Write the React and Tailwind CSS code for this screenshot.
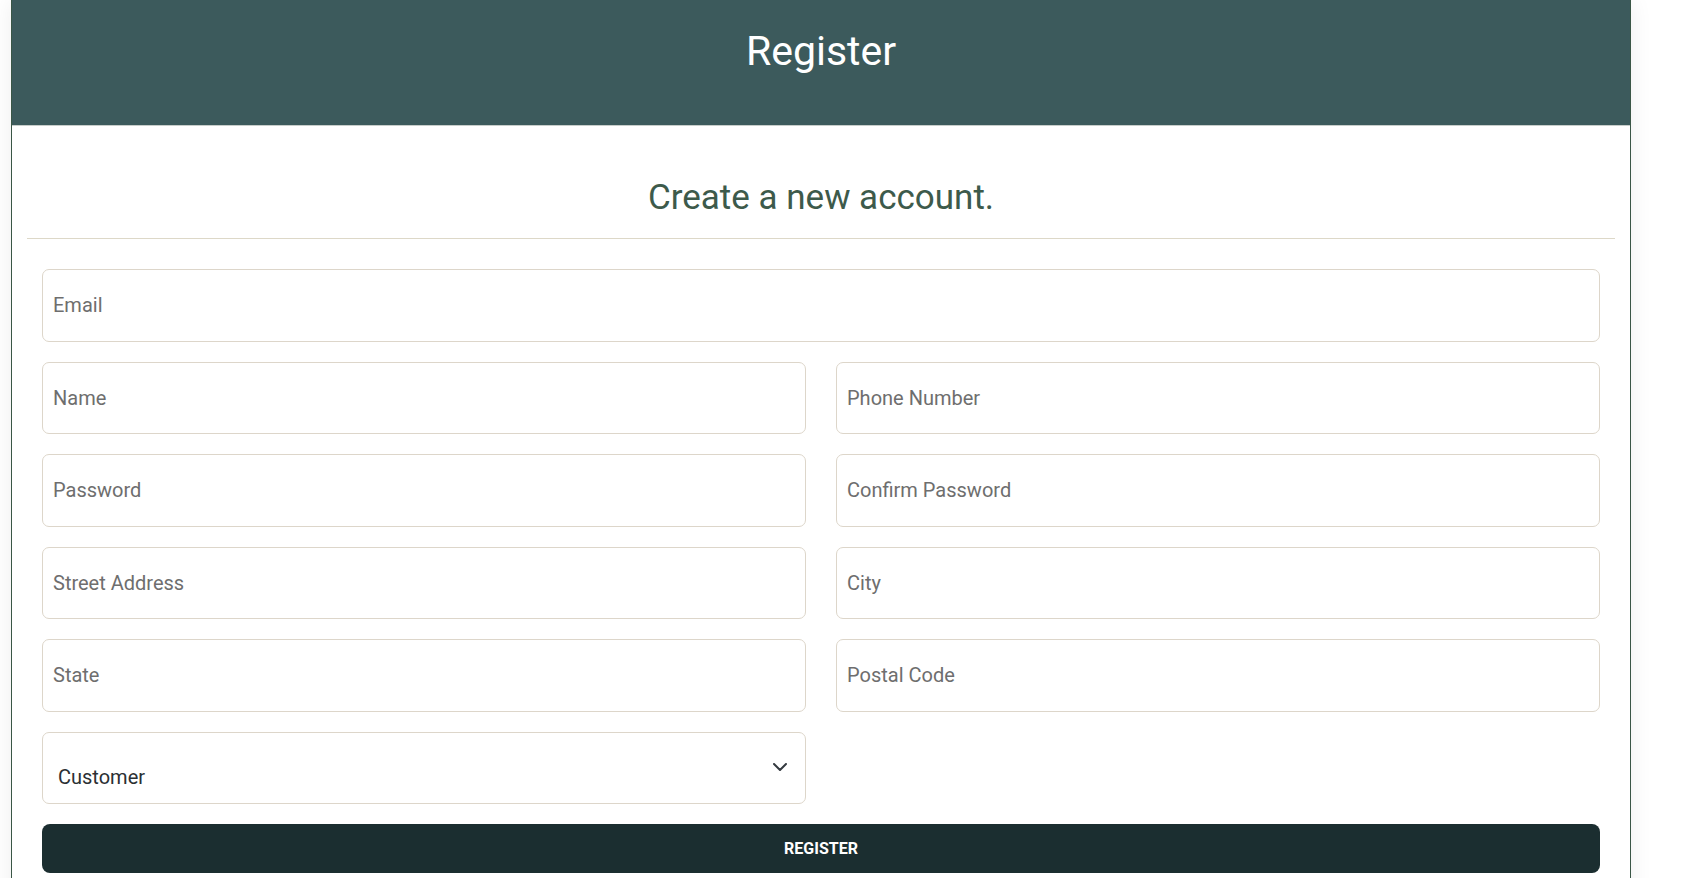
import React from "react";

function Field({ placeholder, type = "text" }) {
  return (
    <input
      type={type}
      placeholder={placeholder}
      className="block w-full h-[72.5px] rounded-[7px] border border-[#ddd6ca] bg-white pl-[10px] text-[20px] text-[#212529] placeholder:text-[#6e6e6e] outline-none font-['Roboto',sans-serif]"
    />
  );
}

export default function App() {
  return (
    <div className="min-h-screen bg-white font-['Roboto',sans-serif]">
      <div className="ml-[11px] w-[1620px] border-x border-[#3a5646] bg-white shadow-[0_0_22px_rgba(0,0,0,0.07)]">
        <header className="h-[126px] bg-[#3c5a5c] border-b border-[#c7cdca] pt-[26px]">
          <h1 className="text-center text-[41px] leading-[50px] text-white">Register</h1>
        </header>
        <div className="px-[15px] pt-[51px]">
          <h2 className="text-center text-[35px] leading-[42px] text-[#3d5a4b]">Create a new account.</h2>
          <div className="mt-[19px] h-px bg-[#ddd8c8]" />
        </div>
        <form className="px-[30px] pt-[30px] pb-[40px] flex flex-col gap-[20px]" onSubmit={(e) => e.preventDefault()}>
          <Field placeholder="Email" type="email" />
          <div className="grid grid-cols-2 gap-x-[30px] gap-y-[20px]">
            <Field placeholder="Name" />
            <Field placeholder="Phone Number" />
            <Field placeholder="Password" type="password" />
            <Field placeholder="Confirm Password" type="password" />
            <Field placeholder="Street Address" />
            <Field placeholder="City" />
            <Field placeholder="State" />
            <Field placeholder="Postal Code" />
            <div className="relative h-[72.5px] rounded-[7px] border border-[#ddd6ca] bg-white">
              <div className="absolute left-[15px] top-[32px] text-[20px] leading-[24px] text-[#2b2f33]">Customer</div>
              <svg className="absolute right-[18px] top-[30px]" width="14" height="8" viewBox="0 0 14 8" fill="none">
                <polyline points="1,1 7,7 13,1" stroke="#343a40" strokeWidth="2" strokeLinecap="round" strokeLinejoin="round" />
              </svg>
            </div>
          </div>
          <button type="submit" className="h-[49px] w-full rounded-[8px] bg-[#1b2e30] text-[16px] font-bold uppercase text-white">
            Register
          </button>
        </form>
      </div>
    </div>
  );
}
